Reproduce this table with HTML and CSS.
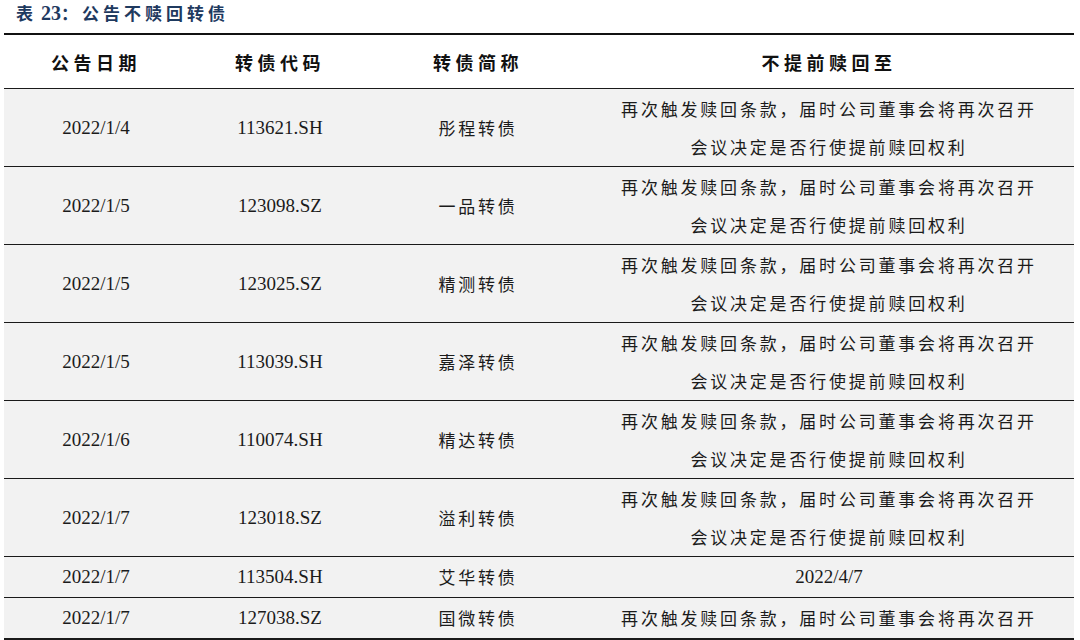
FILE: index.html
```html
<!DOCTYPE html>
<html lang="zh-CN">
<head>
<meta charset="utf-8">
<title>表23：公告不赎回转债</title>
<link rel="stylesheet" href="styles.css">
</head>
<body>
<div class="caption"><span class="cap-cn">表</span> <span class="cap-num">23</span><span class="cap-cn">：公告不赎回转债</span></div>
<table class="bonds">
  <colgroup>
    <col class="c1"><col class="c2"><col class="c3"><col class="c4">
  </colgroup>
  <thead>
    <tr><th>公告日期</th><th>转债代码</th><th>转债简称</th><th>不提前赎回至</th></tr>
  </thead>
  <tbody>
    <tr class="tall"><td class="num">2022/1/4</td><td class="num">113621.SH</td><td class="cn">彤程转债</td><td class="cn">再次触发赎回条款，届时公司董事会将再次召开<br>会议决定是否行使提前赎回权利</td></tr>
    <tr class="tall"><td class="num">2022/1/5</td><td class="num">123098.SZ</td><td class="cn">一品转债</td><td class="cn">再次触发赎回条款，届时公司董事会将再次召开<br>会议决定是否行使提前赎回权利</td></tr>
    <tr class="tall"><td class="num">2022/1/5</td><td class="num">123025.SZ</td><td class="cn">精测转债</td><td class="cn">再次触发赎回条款，届时公司董事会将再次召开<br>会议决定是否行使提前赎回权利</td></tr>
    <tr class="tall"><td class="num">2022/1/5</td><td class="num">113039.SH</td><td class="cn">嘉泽转债</td><td class="cn">再次触发赎回条款，届时公司董事会将再次召开<br>会议决定是否行使提前赎回权利</td></tr>
    <tr class="tall"><td class="num">2022/1/6</td><td class="num">110074.SH</td><td class="cn">精达转债</td><td class="cn">再次触发赎回条款，届时公司董事会将再次召开<br>会议决定是否行使提前赎回权利</td></tr>
    <tr class="tall"><td class="num">2022/1/7</td><td class="num">123018.SZ</td><td class="cn">溢利转债</td><td class="cn">再次触发赎回条款，届时公司董事会将再次召开<br>会议决定是否行使提前赎回权利</td></tr>
    <tr><td class="num">2022/1/7</td><td class="num">113504.SH</td><td class="cn">艾华转债</td><td class="num">2022/4/7</td></tr>
    <tr><td class="num">2022/1/7</td><td class="num">127038.SZ</td><td class="cn">国微转债</td><td class="cn">再次触发赎回条款，届时公司董事会将再次召开</td></tr>
  </tbody>
</table>
</body>
</html>
```
FILE: styles.css
```css
html, body {
  margin: 0;
  padding: 0;
  background: #ffffff;
}

body {
  width: 1080px;
  height: 640px;
  overflow: hidden;
}

.caption {
  height: 33px;
  padding-left: 16px;
  box-sizing: border-box;
  line-height: 26px;
  color: #1f3a5f;
  font-weight: bold;
  white-space: nowrap;
}

.cap-cn {
  font-family: "Noto Sans CJK SC", sans-serif;
  font-size: 17px;
  letter-spacing: 4px;
}

.cap-num {
  font-family: "Liberation Serif", serif;
  font-size: 20px;
  font-weight: bold;
}

.bonds {
  margin-left: 4px;
  width: 1070px;
  border-collapse: collapse;
  table-layout: fixed;
  border-top: 2px solid #111111;
  border-bottom: 2px solid #1a1a1a;
  color: #1b1b1b;
}

.c1 { width: 184px; }
.c2 { width: 184px; }
.c3 { width: 212px; }
.c4 { width: 490px; }

.bonds th {
  height: 53px;
  padding: 0;
  text-align: center;
  vertical-align: middle;
  font-family: "Noto Sans CJK SC", sans-serif;
  font-size: 18px;
  font-weight: bold;
  letter-spacing: 4.5px;
  color: #111111;
  background: #ffffff;
  border-bottom: 1px solid #1a1a1a;
}

.bonds td {
  padding: 0;
  height: 40px;
  text-align: center;
  vertical-align: middle;
  line-height: 38px;
  background: #f2f2f2;
  border-bottom: 1px solid #1a1a1a;
  white-space: nowrap;
}

.bonds tr.tall td {
  height: 77px;
}

.bonds td.num {
  font-family: "Liberation Serif", serif;
  font-size: 19px;
}

.bonds td.cn {
  font-family: "Noto Sans CJK SC", sans-serif;
  font-size: 17px;
  letter-spacing: 2.8px;
  font-weight: 400;
}
```
